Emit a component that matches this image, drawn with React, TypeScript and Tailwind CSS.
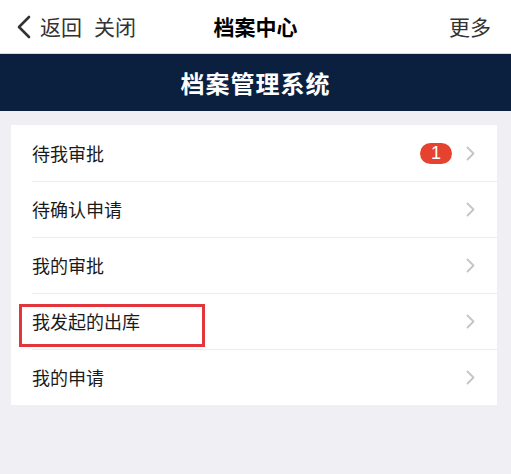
const font = { fontFamily: '"Noto Sans CJK SC", "Noto Sans", sans-serif' };

const rows = [
  { label: '待我审批', badge: 1 },
  { label: '待确认申请' },
  { label: '我的审批' },
  { label: '我发起的出库', marked: true },
  { label: '我的申请' },
];

function Chevron() {
  return (
    <svg width="9" height="15" viewBox="0 0 9 15" fill="none">
      <path d="M1.5 1.5 L7.5 7.5 L1.5 13.5" stroke="#c4c4c8" strokeWidth="1.8" strokeLinecap="round" strokeLinejoin="round" />
    </svg>
  );
}

export default function App() {
  return (
    <div className="w-[511px] h-[474px] bg-[#efeff4] flex flex-col" style={font}>
      {/* nav bar */}
      <div className="h-[54px] bg-white border-b border-[#d6dbe2] flex items-center px-4 relative">
        <svg width="16" height="24" viewBox="0 0 16 24" fill="none" className="mr-2">
          <path d="M13 2 L3 12 L13 22" stroke="#333" strokeWidth="2.6" strokeLinecap="round" strokeLinejoin="round" />
        </svg>
        <span className="text-[21px] text-[#333] leading-none">返回</span>
        <span className="text-[21px] text-[#333] leading-none ml-[12px]">关闭</span>
        <span className="absolute left-1/2 -translate-x-1/2 text-[21px] font-bold text-black leading-none">档案中心</span>
        <span className="ml-auto mr-[4px] text-[21px] text-[#333] leading-none">更多</span>
      </div>

      {/* banner */}
      <div className="h-[57px] bg-[#0b1f3f] flex items-center justify-center">
        <span className="text-[24px] font-bold text-white tracking-[1px] leading-none">档案管理系统</span>
      </div>

      {/* list */}
      <div className="mx-[11px] mt-[14px] w-[486px] bg-white">
        {rows.map((r, i) => (
          <div key={r.label} className="h-[56px] flex items-center pl-[21px] pr-[22px] relative">
            {i > 0 && <div className="absolute top-0 left-[21px] right-0 h-px bg-[#ececef]" />}
            {r.marked && (
              <div className="absolute left-[8px] top-[11px] w-[186px] h-[43px] border-[3px] border-[#e2363c]" />
            )}
            <span className="text-[18px] text-[#1a1a1a] leading-none">{r.label}</span>
            <div className="ml-auto flex items-center gap-[14px]">
              {r.badge && (
                <span
                  className="w-[32px] h-[21px] rounded-full bg-[#e5432f] text-white text-[18px] leading-none flex items-center justify-center"
                  style={{ fontFamily: '"Liberation Sans", sans-serif' }}
                >
                  {r.badge}
                </span>
              )}
              <Chevron />
            </div>
          </div>
        ))}
      </div>
    </div>
  );
}
